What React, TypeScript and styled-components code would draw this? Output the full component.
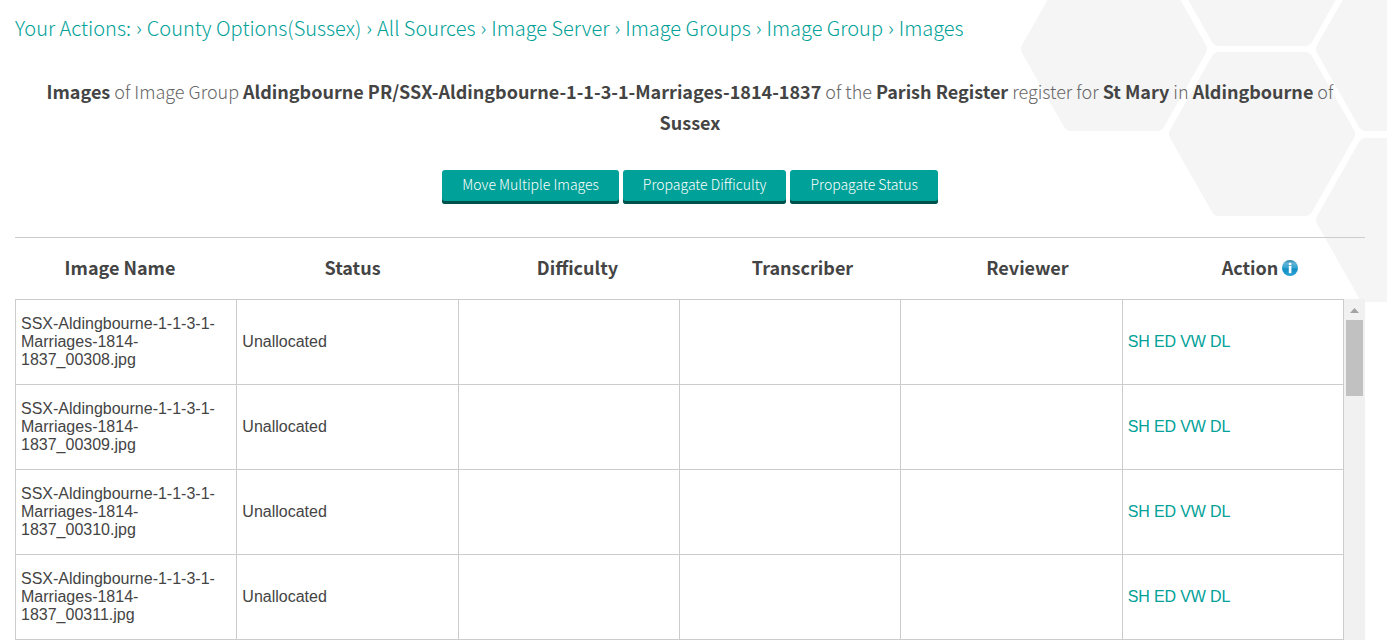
import React, { Fragment } from "react";
import styled, { createGlobalStyle } from "styled-components";

const sourceSans = `"Source Sans Pro", "Noto Sans CJK JP", "Open Sans", sans-serif`;
const teal = "#00a198";
const rule = "#cccccc";
const ink = "#444444";

const GlobalStyle = createGlobalStyle`
  *, *::before, *::after { box-sizing: border-box; }
  body {
    margin: 0;
    background: #ffffff;
    color: ${ink};
    font-family: ${sourceSans};
    font-weight: 300;
  }
`;

const Page = styled.div`
  position: relative;
  height: 100vh;
  overflow: hidden;
`;

const Honeycomb = styled.svg`
  position: absolute;
  top: 0;
  right: 0;
  fill: #f5f5f5;
  stroke: #f5f5f5;
  stroke-width: 16;
  stroke-linejoin: round;
`;

const Content = styled.main`
  position: relative;
  padding: 12px 22px 0 15px;
`;

const Breadcrumb = styled.nav`
  color: ${teal};
  font-size: 20px;
  line-height: 32px;
`;

const Separator = styled.span`
  margin: 0 5px;
`;

const Crumb = styled.a`
  color: ${teal};
  text-decoration: none;
`;

const Summary = styled.p`
  margin: 32px 0 0;
  color: #666666;
  font-size: 18px;
  line-height: 31px;
  text-align: center;

  b {
    color: ${ink};
    font-weight: 700;
  }
`;

const Toolbar = styled.div`
  display: flex;
  justify-content: center;
  gap: 4px;
  margin-top: 32px;
`;

const ToolButton = styled.button`
  height: 34px;
  padding: 0 20px 4px;
  border: 0;
  border-radius: 3px;
  background: ${teal};
  box-shadow: inset 0 -3px #00504c;
  color: #ffffff;
  font-family: inherit;
  font-size: 14px;
  font-weight: 300;
  line-height: 28px;
  padding-bottom: 6px;
`;

const TableArea = styled.div`
  display: grid;
  margin-top: 33px;
`;

const ImageTable = styled.table`
  display: block;
  grid-area: 1 / 1;
  border-top: 1px solid ${rule};
`;

const Head = styled.thead`
  display: block;

  tr {
    display: grid;
    grid-template-columns: repeat(6, 1fr);
  }
`;

const HeadCell = styled.th`
  padding: 0 0 2px;
  font-size: 18px;
  font-weight: 700;
  line-height: 59px;
  text-align: center;

  &:first-child {
    padding-right: 15px;
  }
  &:last-child {
    display: flex;
    align-items: center;
    justify-content: center;
    gap: 4px;
    padding-left: 15px;
  }
`;

const Body = styled.tbody`
  display: block;
  margin-right: 21px;
  border: 1px solid ${rule};
  border-width: 1px 0 0 1px;
  background: #ffffff;
  font-family: "Liberation Sans", Arial, sans-serif;
  font-weight: 400;
  font-size: 16px;
  line-height: 18px;
`;

const Row = styled.tr`
  display: grid;
  grid-template-columns: repeat(6, 1fr);
  border-bottom: 1px solid ${rule};
`;

const Cell = styled.td`
  display: flex;
  align-items: center;
  padding: 15px 5px;
  border-right: 1px solid ${rule};
`;

const Actions = styled.div`
  display: flex;
  gap: 4px;
`;

const ActionLink = styled.a`
  color: ${teal};
  text-decoration: none;
`;

const Scrollbar = styled.div`
  grid-area: 1 / 1;
  justify-self: end;
  width: 21px;
  margin-top: 62px;
  padding: 0 2px;
  background: #f1f1f1;
`;

const ScrollArrow = styled.div`
  display: flex;
  align-items: center;
  justify-content: center;
  height: 21px;
  padding-top: 2px;
`;

const ScrollThumb = styled.div`
  height: 76px;
  background: #c1c1c1;
`;

const InfoIcon = () => (
  <svg width="16" height="16" viewBox="0 0 16 16" role="img" aria-label="Help">
    <defs>
      <linearGradient id="infoFill" x1="0" y1="0" x2="0" y2="1">
        <stop offset="0" stopColor="#2a7fa8" />
        <stop offset="0.2" stopColor="#5fb4d6" />
        <stop offset="0.5" stopColor="#35a3cf" />
        <stop offset="0.55" stopColor="#128fc4" />
        <stop offset="1" stopColor="#2aa2d4" />
      </linearGradient>
    </defs>
    <circle cx="8" cy="8" r="8" fill="url(#infoFill)" />
    <rect x="6.8" y="2.8" width="2.6" height="2.4" rx="0.6" fill="#ffffff" />
    <rect x="6.8" y="6" width="2.6" height="7.2" fill="#ffffff" />
  </svg>
);

const crumbs = [
  "County Options(Sussex)",
  "All Sources",
  "Image Server",
  "Image Groups",
  "Image Group",
  "Images",
];
const tools = ["Move Multiple Images", "Propagate Difficulty", "Propagate Status"];
const columns = ["Image Name", "Status", "Difficulty", "Transcriber", "Reviewer", "Action"];
const actions = ["SH", "ED", "VW", "DL"];
const images = ["00308", "00309", "00310", "00311"];

const hexCentres = [
  [94, 49],
  [242, -36],
  [242, 134],
  [389, 49],
  [389, 220],
];

const hexPoints = ([x, y]: number[]) =>
  [
    [-85, 0],
    [-43, -74],
    [43, -74],
    [85, 0],
    [43, 74],
    [-43, 74],
  ]
    .map(([dx, dy]) => `${x + dx},${y + dy}`)
    .join(" ");

export default function App() {
  return (
    <Page>
      <GlobalStyle />
      <Honeycomb width="367" height="302" aria-hidden="true">
        {hexCentres.map((centre) => (
          <polygon key={centre.join()} points={hexPoints(centre)} />
        ))}
      </Honeycomb>
      <Content>
        <Breadcrumb aria-label="Breadcrumb">
          Your Actions:
          {crumbs.map((name) => (
            <Fragment key={name}>
              <Separator>›</Separator>
              <Crumb href="#">{name}</Crumb>
            </Fragment>
          ))}
        </Breadcrumb>
        <Summary>
          <b>Images</b> of Image Group{" "}
          <b>Aldingbourne PR/SSX-Aldingbourne-1-1-3-1-Marriages-1814-1837</b> of the{" "}
          <b>Parish Register</b> register for <b>St Mary</b> in <b>Aldingbourne</b> of{" "}
          <b>Sussex</b>
        </Summary>
        <Toolbar>
          {tools.map((name) => (
            <ToolButton key={name} type="button">
              {name}
            </ToolButton>
          ))}
        </Toolbar>
        <TableArea>
          <ImageTable>
            <Head>
              <tr>
                {columns.map((name) => (
                  <HeadCell key={name} scope="col">
                    {name}
                    {name === "Action" && <InfoIcon />}
                  </HeadCell>
                ))}
              </tr>
            </Head>
            <Body>
              {images.map((id) => (
                <Row key={id}>
                  <Cell>
                    <span>
                      SSX-Aldingbourne-1-1-3-1-
                      <wbr />
                      Marriages-1814-
                      <wbr />
                      1837_{id}.jpg
                    </span>
                  </Cell>
                  <Cell>Unallocated</Cell>
                  <Cell />
                  <Cell />
                  <Cell />
                  <Cell>
                    <Actions>
                      {actions.map((action) => (
                        <ActionLink key={action} href="#">
                          {action}
                        </ActionLink>
                      ))}
                    </Actions>
                  </Cell>
                </Row>
              ))}
            </Body>
          </ImageTable>
          <Scrollbar aria-hidden="true">
            <ScrollArrow>
              <svg width="9" height="5" viewBox="0 0 9 5">
                <path d="M4.500 0L9 5H0Z" fill="#a3a3a3" />
              </svg>
            </ScrollArrow>
            <ScrollThumb />
          </Scrollbar>
        </TableArea>
      </Content>
    </Page>
  );
}
